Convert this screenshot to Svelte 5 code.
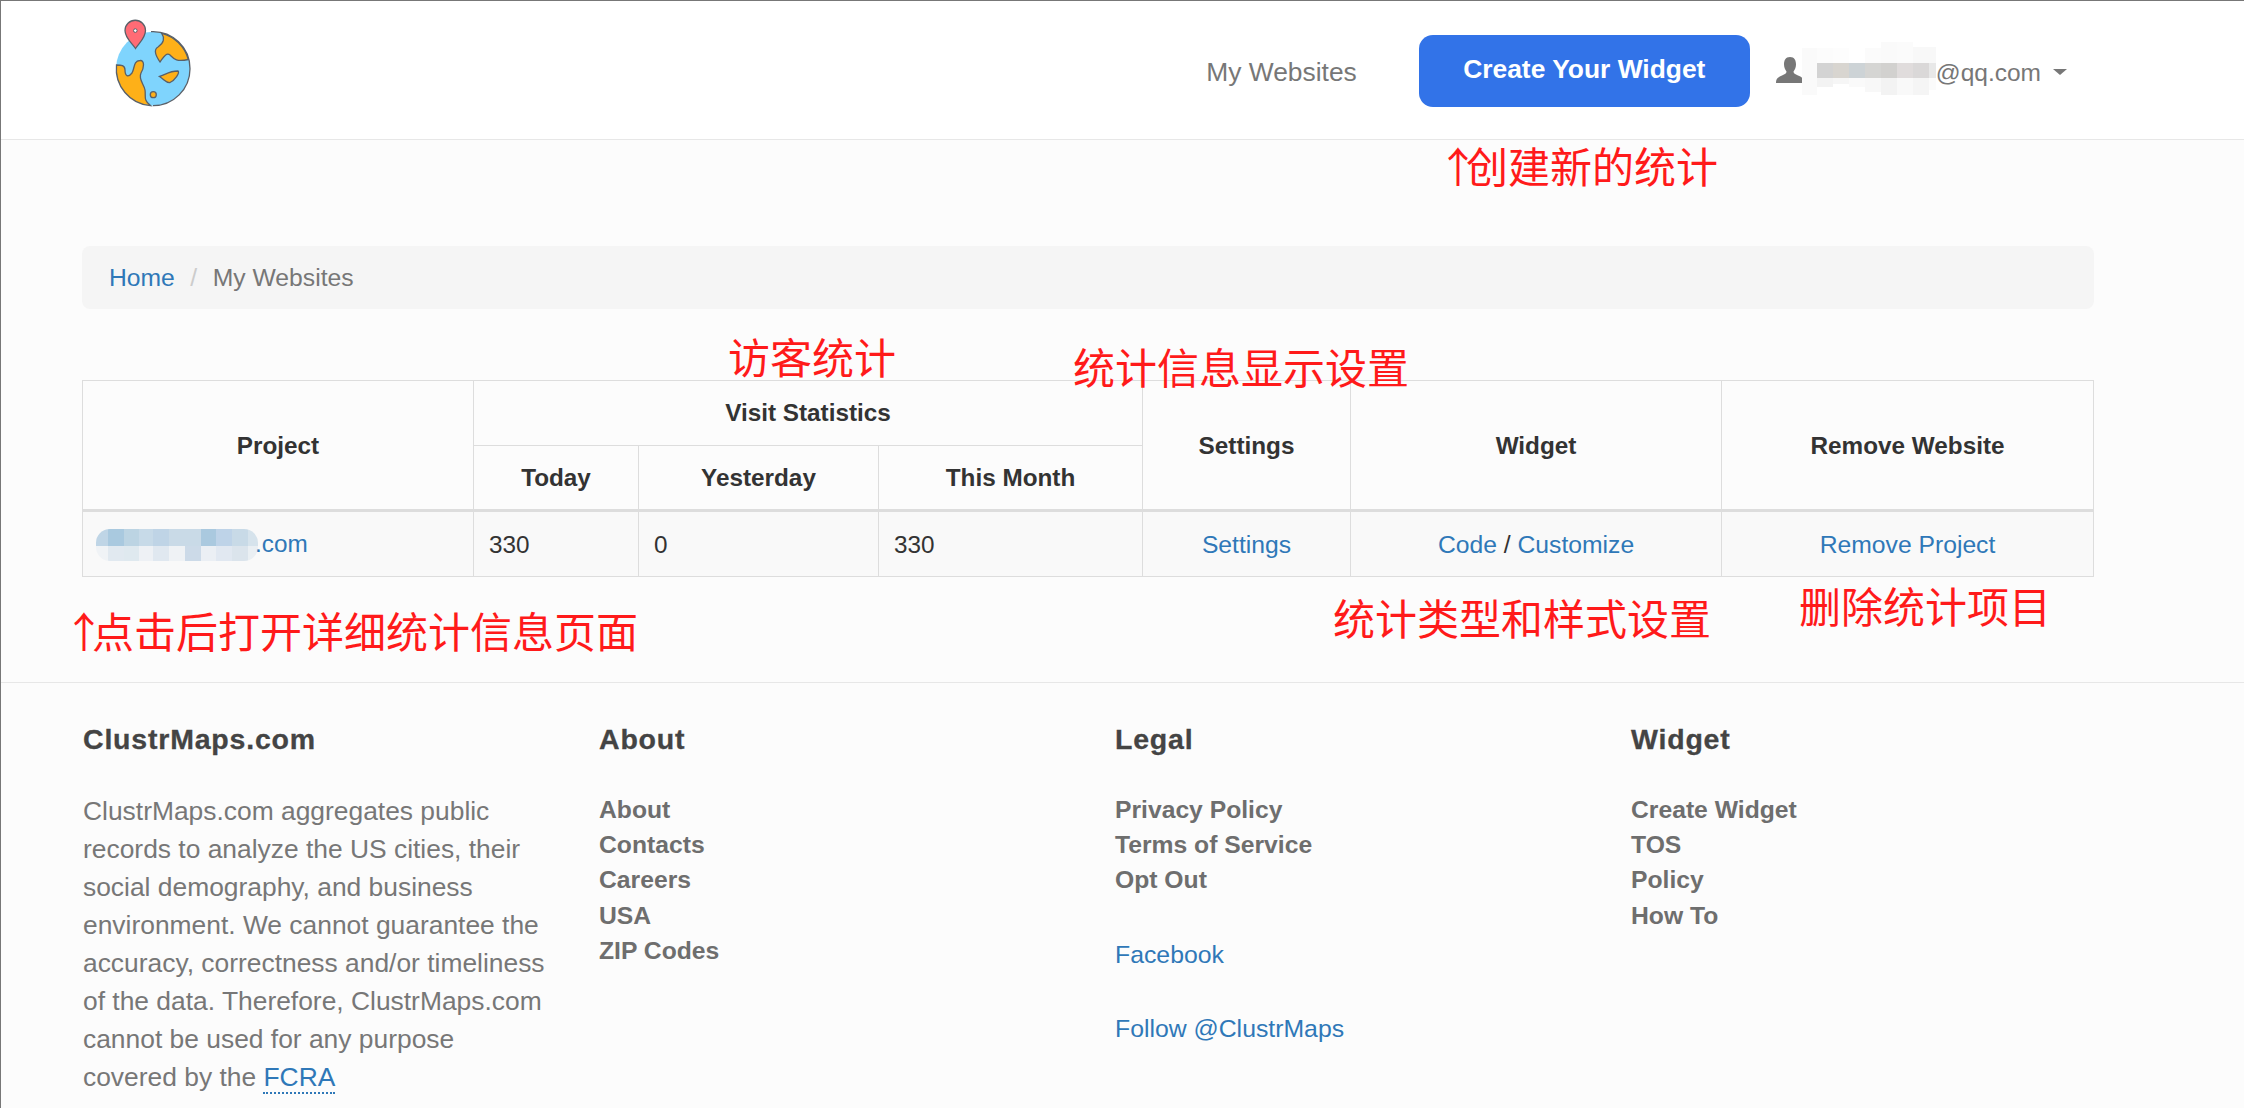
<script>
  const emailTiles = [
    [1803, 48, 15, 47, '#fafafa'], [1818, 48, 16, 15, '#fcfcfc'], [1834, 48, 16, 15, '#fdfdfd'], [1866, 48, 16, 15, '#fbfbfb'], [1882, 42, 16, 21, '#fafafa'], [1898, 42, 16, 21, '#fbfbfb'], [1914, 47, 23, 16, '#f8f8f8'],
    [1818, 63, 16, 15, '#d3d3d3'], [1834, 63, 16, 15, '#d8d5d0'], [1850, 63, 16, 15, '#cdd3d6'], [1866, 63, 16, 15, '#d5d5d3'], [1882, 63, 16, 15, '#d2d1cf'], [1898, 63, 16, 15, '#e0dcdc'], [1914, 63, 16, 15, '#dad8d8'], [1930, 63, 7, 15, '#e8e8e8'],
    [1818, 78, 16, 9, '#f3f3f3'], [1834, 78, 16, 6, '#f6f6f6'], [1850, 78, 16, 9, '#fafafa'], [1866, 78, 16, 14, '#f8f8f8'], [1882, 78, 16, 17, '#f3f3f3'], [1898, 78, 16, 17, '#f9f9f9'], [1914, 78, 16, 17, '#f5f5f5'], [1930, 78, 7, 12, '#fbfbfb']
  ];

  const projectTop = [
    [95, 12, '#bfd5e6'], [107, 16, '#a9c9df'], [123, 15, '#bcd4e3'], [138, 14, '#c7dae8'], [152, 16, '#bfd4e6'], [168, 16, '#c9dae7'], [184, 16, '#c9dae7'], [200, 15, '#aac9df'], [215, 16, '#bed3e8'], [231, 16, '#c8daE7'], [247, 10, '#d6e3ec']
  ];
  const projectBottom = [
    [95, 12, '#f0f3f6'], [107, 16, '#e1e9f0'], [123, 15, '#dfe9ef'], [138, 14, '#eef1f5'], [152, 16, '#e0e8f0'], [168, 16, '#eff2f5'], [184, 16, '#ccdae8'], [200, 15, '#ebeff4'], [215, 16, '#e1e8f1'], [231, 16, '#dbe4ec'], [247, 10, '#eaeff3']
  ];

  const footerAbout = ['About', 'Contacts', 'Careers', 'USA', 'ZIP Codes'];
  const footerLegal = ['Privacy Policy', 'Terms of Service', 'Opt Out'];
  const footerWidget = ['Create Widget', 'TOS', 'Policy', 'How To'];
</script>

<div class="page">
  <header>
    <svg class="logo" viewBox="0 0 120 110" width="120" height="110">
      <circle cx="63" cy="58.7" r="37" fill="#7fd4fd" />
      <path d="M71.7 23.3C75 28 74 33 68 37C63 40 66 46 70 52C73 48 76 42 80 45C84 49 86 52 98.3 49.5A37 37 0 0 0 71.7 23.3Z" fill="#feb018" stroke="#5a6068" stroke-width="1.3" />
      <path d="M26.5 55C31 55 35 55 35 60C35 66 38 68 42 63C45 58 43 51 50 50.5C55 50 54 58 51 63C48 69 54 74 55 80C56 86 53 90 60.5 95.6A37 37 0 0 1 26.5 55Z" fill="#feb018" stroke="#5a6068" stroke-width="1.3" />
      <path d="M69.5 66.5C75 65 79 61 88 61C90 63 85 70 80 72.5C76 73 75 70 69.5 66.5Z" fill="#feb018" stroke="#5a6068" stroke-width="1.3" />
      <circle cx="63.3" cy="84.7" r="3" fill="#feb018" stroke="#5a6068" stroke-width="1.3" />
      <path d="M61 21.6A37 37 0 0 1 100 58.7A37 37 0 0 1 63 95.7" fill="none" stroke="#5a6068" stroke-width="1.3" />
      <path d="M45.5 38.5C42 33 35 28 35 20.5A10.2 10.2 0 0 1 55.5 20.5C55.5 28 49 33 45.5 38.5Z" fill="#ff6b75" stroke="#5a6068" stroke-width="1.3" />
      <circle cx="45.3" cy="20.6" r="1.8" fill="#fff" stroke="#5a6068" stroke-width="1" />
    </svg>
    <nav>
      <a class="nav-link" href="#sites">My Websites</a>
      <a class="create" href="#create">Create Your Widget</a>
      <svg class="user" viewBox="0 0 28 26" width="28" height="26">
        <path d="M14 0C9.5 0 8 3.5 8 7.5C8 11 9.5 13 10.5 14.5C10.5 16.5 9 17 6 18.5C2.5 20 0 21 0 26H28C28 21 25.5 20 22 18.5C19 17 17.5 16.5 17.5 14.5C18.5 13 20 11 20 7.5C20 3.5 18.5 0 14 0Z" fill="#777" />
      </svg>
      <svg class="mosaic-email" viewBox="1803 42 134 53" width="134" height="53">
        {#each emailTiles as [x, y, w, h, fill]}
          <rect {x} {y} width={w} height={h} {fill} />
        {/each}
      </svg>
      <span class="email">@qq.com</span>
      <span class="caret"></span>
    </nav>
  </header>

  <main>
    <div class="breadcrumb">
      <a href="#home">Home</a>
      <span class="sep">/</span>
      <span>My Websites</span>
    </div>

    <table>
      <colgroup>
        <col style="width: 391px" />
        <col style="width: 165px" />
        <col style="width: 240px" />
        <col style="width: 264px" />
        <col style="width: 208px" />
        <col style="width: 371px" />
        <col style="width: 372px" />
      </colgroup>
      <thead>
        <tr class="head-one">
          <th rowspan="2">Project</th>
          <th colspan="3">Visit Statistics</th>
          <th rowspan="2">Settings</th>
          <th rowspan="2">Widget</th>
          <th rowspan="2">Remove Website</th>
        </tr>
        <tr class="head-two">
          <th>Today</th>
          <th>Yesterday</th>
          <th>This Month</th>
        </tr>
      </thead>
      <tbody>
        <tr>
          <td class="project">
            <a href="#project"><svg class="mosaic-project" viewBox="95 533 162 32" width="162" height="32">
              {#each projectTop as [x, w, fill]}
                <rect {x} y="533" width={w} height="17" {fill} />
              {/each}
              {#each projectBottom as [x, w, fill]}
                <rect {x} y="550" width={w} height="15" {fill} />
              {/each}
            </svg>.com</a>
          </td>
          <td>330</td>
          <td>0</td>
          <td>330</td>
          <td class="center"><a href="#settings">Settings</a></td>
          <td class="center"><a href="#code">Code</a> / <a href="#customize">Customize</a></td>
          <td class="center"><a href="#remove">Remove Project</a></td>
        </tr>
      </tbody>
    </table>
  </main>

  <footer>
    <div class="col first">
      <h4>ClustrMaps.com</h4>
      <p>
        ClustrMaps.com aggregates public records to analyze the US cities, their social demography, and business environment. We cannot guarantee the accuracy, correctness and/or timeliness of the data. Therefore, ClustrMaps.com cannot be used for any purpose covered by the <a class="fcra" href="#fcra">FCRA</a>
      </p>
    </div>
    <div class="col">
      <h4>About</h4>
      {#each footerAbout as item}
        <a class="foot-link" href="#about">{item}</a>
      {/each}
    </div>
    <div class="col">
      <h4>Legal</h4>
      {#each footerLegal as item}
        <a class="foot-link" href="#legal">{item}</a>
      {/each}
      <a class="social facebook" href="#facebook">Facebook</a>
      <a class="social follow" href="#follow">Follow @ClustrMaps</a>
    </div>
    <div class="col">
      <h4>Widget</h4>
      {#each footerWidget as item}
        <a class="foot-link" href="#widget">{item}</a>
      {/each}
    </div>
  </footer>

  <!-- red notes drawn over the screenshot -->
  <div class="note n-create"><span class="arrow">↑</span>创建新的统计</div>
  <div class="note n-visit">访客统计</div>
  <div class="note n-display">统计信息显示设置</div>
  <div class="note n-detail"><span class="arrow">↑</span>点击后打开详细统计信息页面</div>
  <div class="note n-type">统计类型和样式设置</div>
  <div class="note n-remove">删除统计项目</div>
</div>

<style>
  :global(body) {
    margin: 0;
    background: #fcfcfc;
  }

  .page {
    position: relative;
    box-sizing: border-box;
    height: 1108px;
    overflow: hidden;
    border-top: 1px solid #777;
    border-left: 1px solid #777;
    background: #fcfcfc;
    font-family: "Liberation Sans", Arial, sans-serif;
    font-size: 24.3px;
    color: #333;
  }

  a {
    color: #2f78b8;
    text-decoration: none;
  }

  header {
    display: flex;
    height: 138px;
    background: #fff;
    border-bottom: 1px solid #e7e7e7;
  }

  .logo {
    margin: 9px 0 0 89px;
  }

  nav {
    display: flex;
    align-items: center;
    margin-left: auto;
    padding-right: 177px;
    font-size: 26.4px;
    color: #777;
  }

  .nav-link {
    color: #777;
    margin: 4px 62px 0 0;
  }

  .create {
    display: flex;
    align-items: center;
    justify-content: center;
    width: 331px;
    height: 72px;
    margin-top: 2px;
    padding-bottom: 4px;
    box-sizing: border-box;
    border-radius: 14px;
    background: #3273e8;
    color: #fff;
    font-size: 26.4px;
    font-weight: bold;
  }

  .user {
    margin: 0 -2px 0 26px;
  }

  .mosaic-email {
    display: block;
    margin-top: -3px;
  }

  .email {
    margin-top: 5px;
    font-size: 24.5px;
  }

  .caret {
    width: 0;
    height: 0;
    margin: 4px 0 0 12px;
    border-top: 6px solid #777;
    border-left: 7px solid transparent;
    border-right: 7px solid transparent;
  }

  main {
    width: 2012px;
    margin-left: 81px;
    height: 542px;
    padding-top: 106px;
    box-sizing: border-box;
  }

  .breadcrumb {
    display: flex;
    align-items: center;
    gap: 15.5px;
    height: 63px;
    padding-left: 27px;
    box-sizing: border-box;
    background: #f5f5f5;
    border-radius: 8px;
    color: #777;
    font-size: 24.7px;
  }

  .sep {
    color: #ccc;
  }

  table {
    width: 2012px;
    margin-top: 71px;
    border-collapse: collapse;
    table-layout: fixed;
    border: 1.5px solid #ddd;
  }

  th,
  td {
    padding: 0 15px;
    border: 1px solid #ddd;
    box-sizing: border-box;
  }

  td {
    padding-top: 2px;
  }

  th {
    font-weight: bold;
    text-align: center;
    color: #333;
  }

  th[rowspan] {
    padding-top: 2px;
  }

  .head-one {
    height: 65px;
  }

  .head-two {
    height: 65px;
  }

  thead {
    border-bottom: 3px solid #ddd;
  }

  tbody tr {
    height: 66px;
    background: #f9f9f9;
  }

  .center {
    text-align: center;
    font-size: 24.7px;
  }

  .project {
    padding-left: 13px;
    white-space: nowrap;
  }

  .mosaic-project {
    margin-right: -3px;
    border-radius: 14px;
    vertical-align: -9px;
  }

  footer {
    display: grid;
    grid-template-columns: repeat(4, 516px);
    padding-top: 39px;
    padding-left: 82px;
    border-top: 1px solid #e7e7e7;
  }

  .col {
    display: flex;
    flex-direction: column;
    align-items: flex-start;
  }

  .first {
    padding-right: 46px;
  }

  h4 {
    height: 34px;
    margin: 0 0 36px;
    font-size: 28.5px;
    line-height: 34px;
    font-weight: bold;
    letter-spacing: 0.8px;
    -webkit-text-stroke: 0.3px #444;
    color: #444;
  }

  p {
    margin: 0;
    font-size: 26.4px;
    line-height: 38px;
    color: #777;
  }

  .fcra {
    border-bottom: 2px dotted #2f78b8;
  }

  .foot-link {
    font-size: 24.7px;
    line-height: 35.2px;
    font-weight: bold;
    color: #6e6e6e;
  }

  .social {
    font-size: 24.8px;
    line-height: 37.7px;
  }

  .facebook {
    margin-top: 38px;
  }

  .follow {
    margin-top: 37px;
  }

  .note {
    position: absolute;
    font-family: "Noto Sans CJK SC", sans-serif;
    font-size: 42px;
    line-height: 50px;
    font-weight: 400;
    color: #ff1a1a;
    white-space: nowrap;
  }

  .arrow {
    margin-left: -11px;
    letter-spacing: -13px;
  }

  .n-create {
    left: 1447px;
    top: 139px;
  }

  .n-visit {
    left: 727px;
    top: 330px;
  }

  .n-display {
    left: 1072px;
    top: 340px;
  }

  .n-detail {
    left: 73px;
    top: 604px;
  }

  .n-type {
    left: 1332px;
    top: 591px;
  }

  .n-remove {
    left: 1798px;
    top: 579px;
  }
</style>
